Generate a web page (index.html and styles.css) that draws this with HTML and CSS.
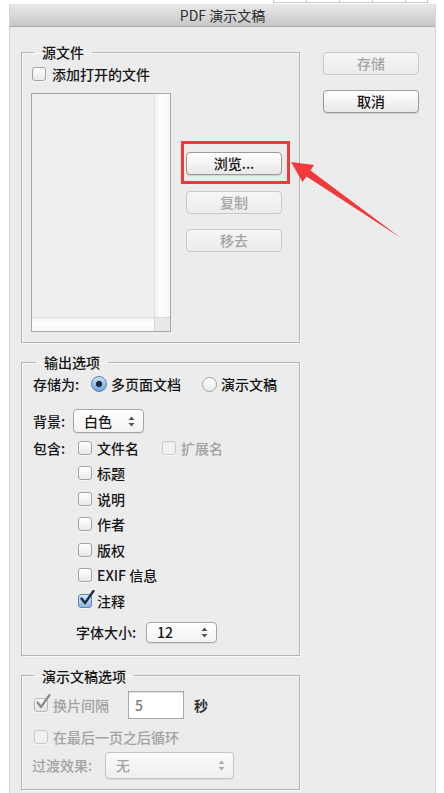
FILE: index.html
```html
<!DOCTYPE html>
<html lang="zh-CN">
<head>
    <meta charset="UTF-8">
    <meta name="viewport" content="width=device-width, initial-scale=1.0">
    <title>PDF 演示文稿</title>
    <link rel="stylesheet" href="styles.css">
</head>
<body>
    <div class="sheet-edge">
        <span></span><span></span><span></span><span></span><span class="narrow"></span>
    </div>
    <div class="window">
        <div class="titlebar">PDF 演示文稿</div>
        <div class="dialog">
            <div class="main-col">
                <fieldset class="group group-source">
                    <legend>源文件</legend>
                    <div class="check-row">
                        <span class="check"></span>添加打开的文件
                    </div>
                    <div class="source-body">
                        <div class="file-list">
                            <div class="list-area"></div>
                            <div class="vscroll"></div>
                            <div class="hscroll"></div>
                            <div class="corner"></div>
                        </div>
                        <div class="file-actions">
                            <div class="highlight">
                                <button class="btn" type="button">浏览...</button>
                            </div>
                            <button class="btn btn-copy" type="button" disabled>复制</button>
                            <button class="btn btn-remove" type="button" disabled>移去</button>
                        </div>
                    </div>
                </fieldset>

                <fieldset class="group group-output">
                    <legend>输出选项</legend>
                    <div class="row row-save">
                        <span class="row-label save-label">存储为:</span>
                        <span class="radio radio-on"></span>
                        <span class="radio-text">多页面文档</span>
                        <span class="radio radio-second"></span>
                        <span class="radio-text">演示文稿</span>
                    </div>
                    <div class="row row-bg">
                        <span class="row-label bg-label">背景:</span>
                        <div class="popup popup-bg">
                            <span>白色</span>
                            <svg class="updown" width="7" height="11" viewBox="0 0 7 11"><path d="M3.5 0.5 L6.5 4 L0.5 4 Z M3.5 10.5 L6.5 7 L0.5 7 Z" fill="#555"/></svg>
                        </div>
                    </div>
                    <div class="include-list">
                        <div class="row include-row">
                            <span class="row-label include-label">包含:</span>
                            <span class="check"></span><span class="check-text">文件名</span>
                            <span class="check check-off"></span><span class="check-text muted">扩展名</span>
                        </div>
                        <div class="row include-row indent">
                            <span class="check"></span><span class="check-text">标题</span>
                        </div>
                        <div class="row include-row indent">
                            <span class="check"></span><span class="check-text">说明</span>
                        </div>
                        <div class="row include-row indent">
                            <span class="check"></span><span class="check-text">作者</span>
                        </div>
                        <div class="row include-row indent">
                            <span class="check"></span><span class="check-text">版权</span>
                        </div>
                        <div class="row include-row indent">
                            <span class="check"></span><span class="check-text">EXIF 信息</span>
                        </div>
                        <div class="row include-row indent">
                            <span class="check check-on">
                                <svg width="17" height="17" viewBox="0 0 17 17"><path d="M2.5 8.5 L6 13 L14.5 1" fill="none" stroke="#1d2f4b" stroke-width="2.4" stroke-linecap="round" stroke-linejoin="round"/></svg>
                            </span><span class="check-text">注释</span>
                        </div>
                    </div>
                    <div class="row row-size">
                        <span class="row-label size-label">字体大小:</span>
                        <div class="popup popup-size">
                            <span>12</span>
                            <svg class="updown" width="7" height="11" viewBox="0 0 7 11"><path d="M3.5 0.5 L6.5 4 L0.5 4 Z M3.5 10.5 L6.5 7 L0.5 7 Z" fill="#555"/></svg>
                        </div>
                    </div>
                </fieldset>

                <fieldset class="group group-show">
                    <legend>演示文稿选项</legend>
                    <div class="row row-interval">
                        <span class="check check-on check-dim">
                            <svg width="17" height="17" viewBox="0 0 17 17"><path d="M2.5 8.5 L6 13 L14.5 1" fill="none" stroke="#8a8a8a" stroke-width="2.2" stroke-linecap="round" stroke-linejoin="round"/></svg>
                        </span>
                        <span class="check-text muted interval-text">换片间隔</span>
                        <div class="field">5</div>
                        <span class="unit">秒</span>
                    </div>
                    <div class="row row-loop">
                        <span class="check check-off"></span>
                        <span class="check-text muted">在最后一页之后循环</span>
                    </div>
                    <div class="row row-trans">
                        <span class="row-label muted trans-label">过渡效果:</span>
                        <div class="popup popup-trans">
                            <span>无</span>
                            <svg class="updown" width="7" height="11" viewBox="0 0 7 11"><path d="M3.5 0.5 L6.5 4 L0.5 4 Z M3.5 10.5 L6.5 7 L0.5 7 Z" fill="#aaa"/></svg>
                        </div>
                    </div>
                </fieldset>
            </div>
            <div class="side-col">
                <button class="btn" type="button" disabled>存储</button>
                <button class="btn btn-cancel" type="button">取消</button>
            </div>
        </div>
    </div>

    <!-- annotation arrow pointing at the browse button -->
    <svg class="arrow" width="444" height="793" viewBox="0 0 444 793">
        <polygon points="291,162 314,165 310.5,170.5 401,238 306.5,176.5 302.5,182" fill="#f2393b"/>
    </svg>
</body>
</html>
```

FILE: styles.css
```css
body {
    margin: 0;
    padding: 0;
    background: #ffffff;
    font-family: "Noto Sans CJK SC", "Liberation Sans", sans-serif;
    font-size: 14px;
    font-weight: 500;
    color: #161616;
    position: relative;
    width: 444px;
    height: 793px;
    overflow: hidden;
}
.sheet-edge {
    height: 4px;
    display: flex;
    padding-left: 273px;
    box-sizing: border-box;
}
.sheet-edge span {
    width: 33px;
    height: 3px;
    border-left: 1px solid #c9c9c9;
    border-bottom: 1px solid #c9c9c9;
    box-sizing: border-box;
}
.sheet-edge span.narrow {
    width: 23px;
    border-right: 1px solid #c9c9c9;
}
.window {
    margin-left: 9px;
    width: 427px;
    height: 789px;
    background: #ececec;
    border-left: 1px solid #d6d6d6;
    border-right: 1px solid #d6d6d6;
    box-sizing: border-box;
}
.titlebar {
    height: 23px;
    line-height: 22px;
    text-align: center;
    font-size: 14px;
    font-weight: 400;
    color: #2e2e2e;
    background: linear-gradient(#e8e8e8, #d2d2d2 70%, #c6c6c6);
    border-bottom: 1px solid #a8a8a8;
    box-sizing: border-box;
}
.dialog {
    display: flex;
    padding: 16px 0 0 11px;
}
.main-col {
    width: 279px;
}
.side-col {
    margin-left: 23px;
    padding-top: 9px;
    display: flex;
    flex-direction: column;
}
.side-col .btn-cancel {
    margin-top: 15px;
}

/* group boxes */
.group {
    margin: 0;
    min-width: 0;
    border: 1px solid #b4b4b4;
    box-shadow: 1px 1px 0 #fafafa, inset 1px 1px 0 #fafafa;
    padding: 0 9px 10px 9px;
}
.group legend {
    padding: 0 8px;
    margin-left: 3px;
    line-height: 18px;
    font-size: 14px;
}
.group-output {
    margin-top: 10px;
    padding: 0 9px 12px 11px;
}
.group-show {
    margin-top: 11px;
    padding: 0 9px 10px 12px;
}
.group-show legend {
    margin-left: 0;
}

.row {
    display: flex;
    align-items: center;
}
.check-row {
    display: flex;
    align-items: center;
    height: 20px;
    margin-top: 3px;
}
.check-row .check {
    margin-left: 1px;
    margin-right: 6px;
}

/* checkbox and radio */
.check {
    width: 14px;
    height: 14px;
    border: 1px solid #a3a3a3;
    border-radius: 3px;
    background: linear-gradient(#ffffff, #e9e9e9);
    box-sizing: border-box;
    flex: none;
    position: relative;
    box-shadow: 0 1px 0 rgba(255, 255, 255, 0.6);
}
.check-off {
    border-color: #cacaca;
    background: #f1f1f1;
}
.check-on {
    border-color: #5c86bd;
    background: linear-gradient(#d7e8f9, #8cb6e5);
}
.check-on svg {
    position: absolute;
    left: 0;
    top: -5px;
}
.check-dim {
    border-color: #b9b9b9;
    background: linear-gradient(#f8f8f8, #e3e3e3);
}
.check-text {
    margin-left: 5px;
}
.muted {
    color: #a2a2a2;
}
.radio {
    width: 15px;
    height: 15px;
    border-radius: 50%;
    border: 1px solid #a0a0a0;
    background: linear-gradient(#ffffff, #ebebeb);
    box-sizing: border-box;
    flex: none;
}
.radio-on {
    width: 16px;
    height: 16px;
    border-color: #5a84b8;
    background: radial-gradient(circle, #1b2b45 0 2.8px, transparent 3.4px), linear-gradient(#c9e0f7, #6ea2dc);
}
.radio-text {
    margin-left: 4px;
}
.radio-second {
    margin-left: 21px;
}

/* source files */
.source-body {
    display: flex;
    margin-top: 9px;
}
.file-list {
    width: 140px;
    height: 239px;
    border: 1px solid #a7a7a7;
    box-sizing: border-box;
    display: grid;
    grid-template-columns: 1fr 16px;
    grid-template-rows: 1fr 14px;
    background: #efefef;
}
.vscroll {
    background: linear-gradient(90deg, #f1f1f1, #ffffff 40%, #f7f7f7);
    border-left: 1px solid #e2e2e2;
}
.hscroll {
    background: linear-gradient(#f1f1f1, #ffffff 40%, #f7f7f7);
    border-top: 1px solid #e2e2e2;
}
.corner {
    background: #e9e9e9;
    border-left: 1px solid #d6d6d6;
    border-top: 1px solid #d6d6d6;
}
.file-actions {
    margin-left: 10px;
    padding-top: 48px;
    display: flex;
    flex-direction: column;
    align-items: flex-start;
}
.highlight {
    border: 3px solid #f0393b;
    padding: 8px 5px 6px 2px;
}
.file-actions .btn-copy {
    margin: 7px 0 0 5px;
}
.file-actions .btn-remove {
    margin: 15px 0 0 5px;
}

/* buttons */
.btn {
    width: 96px;
    height: 23px;
    padding: 0;
    font-family: inherit;
    font-size: 14px;
    font-weight: 500;
    line-height: 21px;
    color: #161616;
    border: 1px solid #9a9a9a;
    border-radius: 4px;
    background: linear-gradient(#ffffff, #f3f3f3 50%, #e8e8e8);
    box-shadow: 0 1px 1px rgba(0, 0, 0, 0.12);
}
.btn:disabled {
    color: #a5a5a5;
    border-color: #c9c9c9;
    background: linear-gradient(#f6f6f6, #ececec);
    box-shadow: none;
}

/* output options */
.row-save {
    height: 22px;
    margin-top: 2px;
}
.row-label {
    flex: none;
}
.save-label {
    width: 58px;
}
.row-bg {
    margin-top: 14px;
}
.bg-label {
    width: 40px;
}
.popup {
    height: 24px;
    border: 1px solid #a6a6a6;
    border-radius: 4px;
    background: linear-gradient(#ffffff, #f2f2f2);
    box-sizing: border-box;
    display: flex;
    align-items: center;
    justify-content: space-between;
    padding: 0 8px 0 10px;
    box-shadow: 0 1px 1px rgba(0, 0, 0, 0.08);
}
.popup-bg {
    width: 71px;
}
.include-list {
    margin-top: 2px;
}
.include-row {
    height: 25.5px;
}
.include-label {
    width: 45px;
}
.include-row .check-off {
    margin-left: 23px;
}
.indent {
    padding-left: 45px;
}
.row-size {
    margin-top: 8px;
    padding-left: 43px;
}
.size-label {
    width: 70px;
}
.popup-size {
    width: 71px;
    height: 21px;
}

/* presentation options */
.row-interval {
    margin-top: 6px;
}
.interval-text {
    width: 69px;
}
.field {
    width: 56px;
    height: 28px;
    margin-left: 6px;
    border: 1px solid #a9a9a9;
    box-shadow: inset 0 1px 1px rgba(0, 0, 0, 0.12);
    background: #ffffff;
    box-sizing: border-box;
    color: #7d7d7d;
    line-height: 26px;
    padding-left: 6px;
}
.unit {
    margin-left: 10px;
    font-weight: bold;
    color: #333;
}
.row-loop {
    height: 20px;
    margin-top: 8px;
}
.row-trans {
    margin-top: 5px;
}
.trans-label {
    width: 73px;
    margin-left: -2px;
}
.popup-trans {
    width: 129px;
    height: 27px;
    color: #a2a2a2;
    border-color: #c4c4c4;
    background: linear-gradient(#fafafa, #efefef);
}

/* annotation */
.arrow {
    position: absolute;
    left: 0;
    top: 0;
    pointer-events: none;
}
```
